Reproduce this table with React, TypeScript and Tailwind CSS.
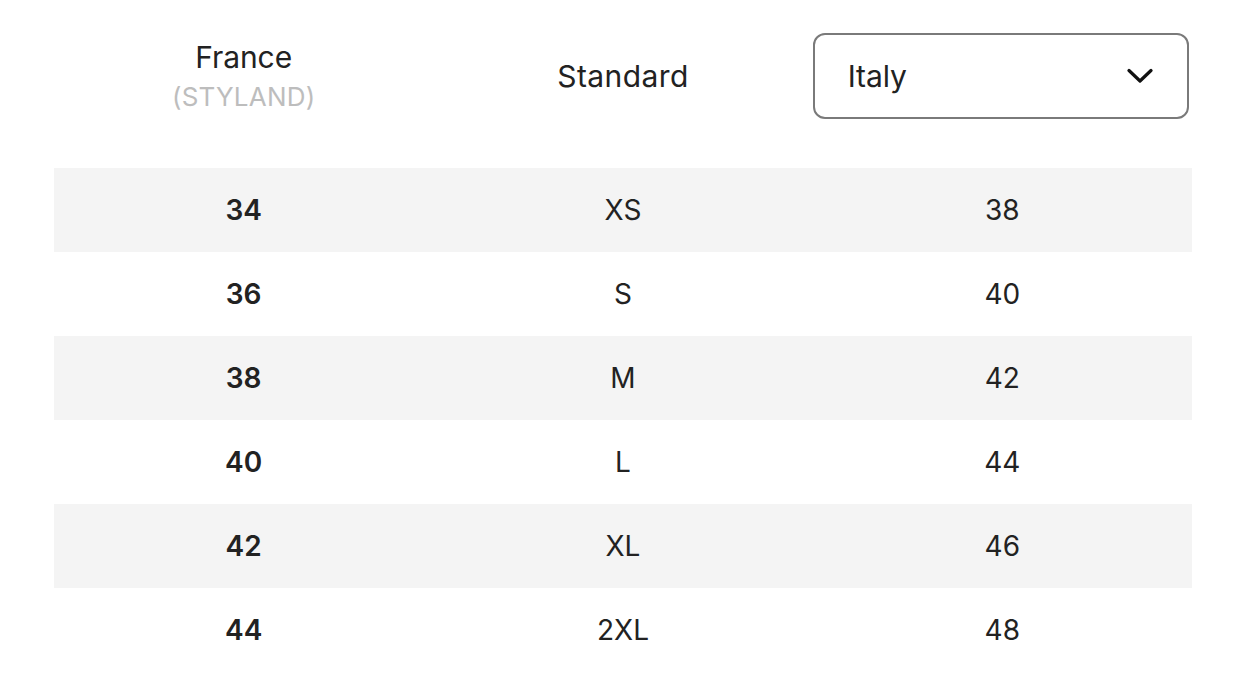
import React from "react";

const rows = [
  { fr: "34", std: "XS", it: "38" },
  { fr: "36", std: "S", it: "40" },
  { fr: "38", std: "M", it: "42" },
  { fr: "40", std: "L", it: "44" },
  { fr: "42", std: "XL", it: "46" },
  { fr: "44", std: "2XL", it: "48" },
];

const App = () => {
  return (
    <div className="min-h-screen bg-white pl-[54px] pr-[44px] pt-[33px] font-['Inter',sans-serif] text-[#222]">
      {/* Header row */}
      <div className="grid grid-cols-3 items-center h-[86px]">
        <div className="flex flex-col items-center leading-none">
          <span className="text-[30px] leading-[36px] tracking-[-0.1px]">France</span>
          <span className="text-[26px] leading-[32px] text-[#bdbdbd] mt-[6px] tracking-[0.2px]">
            (STYLAND)
          </span>
        </div>
        <div className="flex justify-center">
          <span className="text-[30px] tracking-[0.4px]">Standard</span>
        </div>
        <div className="flex justify-start">
          <button className="flex items-center justify-between w-[376px] h-[86px] border-2 border-[#7a7a7a] rounded-[12px] pl-[33px] pr-[34px] bg-white">
            <span className="text-[30px] tracking-[-0.1px]">Italy</span>
            <svg width="26" height="16" viewBox="0 0 26 16" fill="none">
              <path
                d="M2 2.5L13 13L24 2.5"
                stroke="#111"
                strokeWidth="3.2"
                strokeLinecap="round"
                strokeLinejoin="round"
              />
            </svg>
          </button>
        </div>
      </div>

      {/* Size table */}
      <div className="mt-[49px]">
        {rows.map((r, i) => (
          <div
            key={r.fr}
            className={`grid grid-cols-3 items-center h-[84px] text-[28px] ${
              i % 2 === 0 ? "bg-[#f4f4f4]" : "bg-white"
            }`}
          >
            <span className="text-center font-semibold">{r.fr}</span>
            <span className="text-center">{r.std}</span>
            <span className="text-center">{r.it}</span>
          </div>
        ))}
      </div>
    </div>
  );
};

export default App;
